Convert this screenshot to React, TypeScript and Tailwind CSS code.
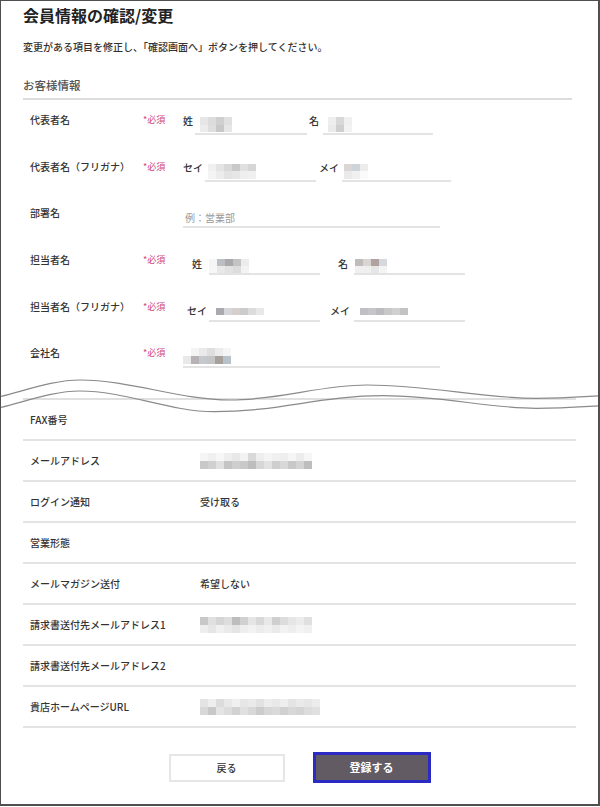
import React from "react";

type MosaicProps = { rows: string[]; cw?: number; ch?: number };

function Mosaic({ rows, cw = 8, ch = 8 }: MosaicProps) {
  return (
    <div className="flex flex-col">
      {rows.map((r, i) => (
        <div key={i} className="flex">
          {r.split(",").map((c, j) => (
            <div
              key={j}
              style={{ width: cw, height: ch, backgroundColor: c.length === 2 ? `#${c}${c}${c}` : `#${c}` }}
            />
          ))}
        </div>
      ))}
    </div>
  );
}

type FieldProps = {
  prefix?: string;
  pfxMl: string;
  pfxMb: string;
  inputMl: string;
  inputW: string;
  mosaic?: string[];
  mosaicPl: string;
  mosaicPb: string;
  ch?: number;
};

function Field({ prefix, pfxMl, pfxMb, inputMl, inputW, mosaic, mosaicPl, mosaicPb, ch }: FieldProps) {
  return (
    <>
      {prefix && (
        <span className={`${pfxMl} ${pfxMb} text-[10px] leading-[14px] font-medium whitespace-nowrap`}>{prefix}</span>
      )}
      <div className={`${inputMl} ${inputW} h-[22px] border-b-2 border-[#e3e3e3] flex items-end ${mosaicPl} ${mosaicPb}`}>
        {mosaic && <Mosaic rows={mosaic} ch={ch} />}
      </div>
    </>
  );
}

function FormRow({ label, required, children }: { label: string; required?: boolean; children?: React.ReactNode }) {
  return (
    <div className="h-[46.7px] flex items-start">
      <div className="w-[120px] pl-[7px] text-[10px] leading-[14px] font-medium whitespace-nowrap">{label}</div>
      <div className="w-[40px] text-[9px] leading-[14px] text-[#d0457a] whitespace-nowrap">{required ? "*必須" : ""}</div>
      <div className="flex items-end h-[22px]">{children}</div>
    </div>
  );
}

function TableRow({ label, value, mosaic }: { label: string; value?: string; mosaic?: string[] }) {
  return (
    <div className="h-[41px] border-b-2 border-[#e3e3e3] flex items-center">
      <div className="w-[177px] pl-[7px] text-[10px] leading-[14px] font-medium whitespace-nowrap">{label}</div>
      {value && <div className="text-[10px] leading-[14px] font-medium">{value}</div>}
      {mosaic && <Mosaic rows={mosaic} />}
    </div>
  );
}

export default function App() {
  return (
    <div className="relative w-[600px] h-[806px] border-l border-t border-r-2 border-b-2 border-[#4f4f4f] bg-white overflow-hidden font-['Noto_Sans_CJK_JP','Noto_Sans',sans-serif] text-[#333]">
      <div className="pl-[22px] pr-[22px] pt-[2px]">
        <h1 className="text-[16px] leading-[24px] font-bold text-[#222]">会員情報の確認/変更</h1>
        <p className="mt-[13px] text-[10px] leading-[14px] font-medium whitespace-nowrap">
          変更がある項目を修正し、「確認画面へ」ボタンを押してください。
        </p>
        <div className="mt-[23px] mr-[4px] border-b-2 border-[#dcdcdc] pb-[5px]">
          <h2 className="text-[11.5px] leading-[16px] text-[#555] font-medium">お客様情報</h2>
        </div>

        <div className="mt-[13px]">
          <FormRow label="代表者名" required>
            <Field
              prefix="姓"
              pfxMl="ml-0"
              pfxMb="mb-[7px]"
              inputMl="ml-[2px]"
              inputW="w-[112px]"
              mosaic={["e6,dc,cf,e0", "ec,de,c8,e6"]}
              mosaicPl="pl-[5px]"
              mosaicPb="pb-[1px]"
              ch={7.5}
            />
            <Field
              prefix="名"
              pfxMl="ml-[2px]"
              pfxMb="mb-[7px]"
              inputMl="ml-[4px]"
              inputW="w-[110px]"
              mosaic={["ee,d8,f0", "ea,cf,f2"]}
              mosaicPl="pl-[5px]"
              mosaicPb="pb-[1px]"
              ch={7.5}
            />
          </FormRow>
          <FormRow label="代表者名（フリガナ）" required>
            <Field
              prefix="セイ"
              pfxMl="ml-0"
              pfxMb="mb-[7px]"
              inputMl="ml-[2px]"
              inputW="w-[111px]"
              mosaic={["f0,e4,d8,c9,e0,d6", "f4,ec,e3,e6,ee,f0"]}
              mosaicPl="pl-[3px]"
              mosaicPb="pb-[1px]"
              ch={7.5}
            />
            <Field
              prefix="メイ"
              pfxMl="ml-[3px]"
              pfxMb="mb-[7px]"
              inputMl="ml-[3px]"
              inputW="w-[109px]"
              mosaic={["dad6d6,cfd3da,ec", "ea,f0,fa"]}
              mosaicPl="pl-[2px]"
              mosaicPb="pb-[1px]"
              ch={7.5}
            />
          </FormRow>
          <FormRow label="部署名">
            <div className="w-[257px] h-[22px] border-b-2 border-[#e3e3e3] flex items-end pl-[2px] pb-[1px]">
              <span className="text-[10px] leading-[14px] text-[#9a9a9a]">例：営業部</span>
            </div>
          </FormRow>
          <FormRow label="担当者名" required>
            <Field
              prefix="姓"
              pfxMl="ml-[9px]"
              pfxMb="mb-[4px]"
              inputMl="ml-[7px]"
              inputW="w-[111px]"
              mosaic={["f5,bbbec3,a9a9ab,c3,ec", "f6,e8,e2,dc,f3"]}
              mosaicPl="pl-0"
              mosaicPb="pb-0"
              ch={7}
            />
            <Field
              prefix="名"
              pfxMl="ml-[18px]"
              pfxMb="mb-[4px]"
              inputMl="ml-[6px]"
              inputW="w-[111px]"
              mosaic={["c0bcbb,d8d5d2,b0a29e,d5d9de", "f0,ef,e6,f4"]}
              mosaicPl="pl-[1px]"
              mosaicPb="pb-0"
              ch={7}
            />
          </FormRow>
          <FormRow label="担当者名（フリガナ）" required>
            <Field
              prefix="セイ"
              pfxMl="ml-[4px]"
              pfxMb="mb-[4px]"
              inputMl="ml-[2px]"
              inputW="w-[111px]"
              mosaic={["a9aaae,d6d6d8,d5d0cd,cc,dc,e8"]}
              mosaicPl="pl-[7px]"
              mosaicPb="pb-[5px]"
              ch={7}
            />
            <Field
              prefix="メイ"
              pfxMl="ml-[10px]"
              pfxMb="mb-[4px]"
              inputMl="ml-[4px]"
              inputW="w-[111px]"
              mosaic={["c0c0c4,c6c6ca,bcbcbe,c8c8ca,d0,c3"]}
              mosaicPl="pl-[6px]"
              mosaicPb="pb-[5px]"
              ch={7}
            />
          </FormRow>
          <FormRow label="会社名" required>
            <Field
              pfxMl=""
              pfxMb=""
              inputMl="ml-0"
              inputW="w-[257px]"
              mosaic={["ff,f4,ea,de,ec,f5", "e9,b5b3b3,c6c9cc,c5,a7a19e,b9c2c8"]}
              mosaicPl="pl-0"
              mosaicPb="pb-[2px]"
            />
          </FormRow>
        </div>

        <div className="mt-[5px] border-t-2 border-[#e0e0e0]">
          <TableRow label="FAX番号" />
          <TableRow
            label="メールアドレス"
            mosaic={[
              "f5,f0,f7,ee,e8,f2,d9,ee,f4,f0,ee,f5,ec,f6",
              "c8,d0,e0,c4,cf,c9,bd,d6,e2,cf,d8,c8,d3,be",
            ]}
          />
          <TableRow label="ログイン通知" value="受け取る" />
          <TableRow label="営業形態" />
          <TableRow label="メールマガジン送付" value="希望しない" />
          <TableRow
            label="請求書送付先メールアドレス1"
            mosaic={[
              "c8,e0,d5,dd,bd,d0,e5,d8,e8,cf,dc,e6,ec,e0",
              "ee,e6,f0,ea,e4,ee,f2,ec,f0,ea,f2,ee,f4,f0",
            ]}
          />
          <TableRow label="請求書送付先メールアドレス2" />
          <TableRow
            label="貴店ホームページURL"
            mosaic={[
              "e4,ee,dc,e8,f0,e6,ea,e2,ec,e8,ee,e4,ea,e6,ec",
              "d8,c8,e4,dc,d2,e0,d8,cc,d6,da,d0,d8,d4,dc,e0",
            ]}
          />
        </div>

        <div className="mt-[24px] h-[31px] flex justify-center items-center gap-[28px]">
          <button className="w-[116px] h-[28px] border-2 border-[#e6e6e6] bg-white text-[10px] font-medium text-[#333]">
            戻る
          </button>
          <button className="w-[118px] h-[31px] border-[3px] border-[#2b2bc4] bg-[#625b63] text-[11px] font-bold text-white">
            登録する
          </button>
        </div>
      </div>

      <svg
        className="absolute left-[-1px] top-[374px] w-[600px] h-[40px] pointer-events-none"
        viewBox="0 0 600 40"
        fill="none"
      >
        <path
          d="M0 21.7 C 30 14, 55 5, 80 5 C 130 5, 180 25, 230 25 C 280 25, 320 10, 367 10 C 430 10, 480 23.3, 536 23.3 C 565 23.3, 585 21.5, 600 20.7"
          stroke="#8a8a8a"
          strokeWidth="1.2"
        />
        <path
          d="M0 32.7 C 30 25, 55 16, 80 16 C 125 16, 170 36.7, 214 36.7 C 280 36.7, 320 20.7, 383 20.7 C 440 20.7, 490 33.3, 536 33.3 C 565 33.3, 585 31.5, 600 30.7"
          stroke="#8a8a8a"
          strokeWidth="1.2"
        />
      </svg>
    </div>
  );
}
